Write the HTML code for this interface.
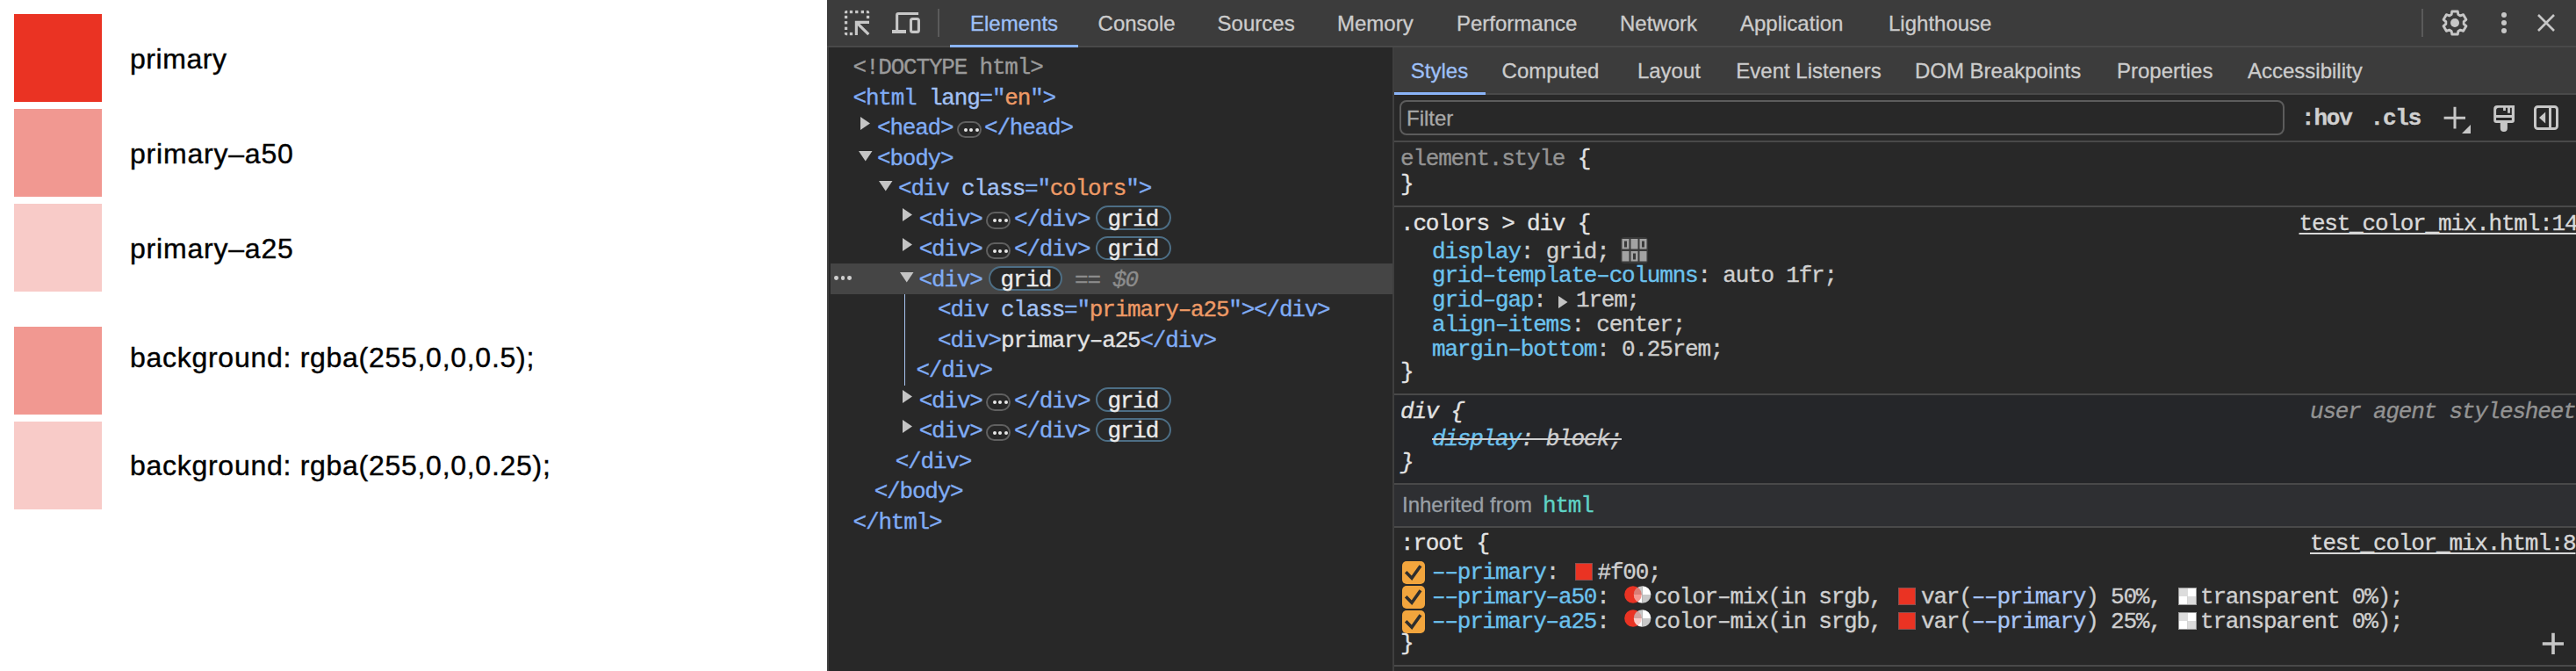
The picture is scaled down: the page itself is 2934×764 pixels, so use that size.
<!DOCTYPE html>
<html lang="en"><head><meta charset="utf-8"><title>DevTools</title><style>
html,body{margin:0;padding:0;width:2934px;height:764px;overflow:hidden;background:#fff}
.b{position:absolute;box-sizing:content-box}
.m{position:absolute;-webkit-text-stroke:0.35px currentColor;font-family:"Liberation Mono",monospace;font-size:26px;letter-spacing:-1.2px;line-height:28px;white-space:pre}
.s{position:absolute;-webkit-text-stroke:0.3px currentColor;font-family:"Liberation Sans",sans-serif;font-size:24px;line-height:28px;white-space:pre}
.p{position:absolute;-webkit-text-stroke:0.4px currentColor;font-family:"Liberation Sans",sans-serif;font-size:32px;line-height:40px;white-space:pre;color:#000}
</style></head><body>
<div class="b" style="left:0px;top:0px;width:942px;height:764px;background:#ffffff;"></div>
<div class="b" style="left:16px;top:16px;width:100px;height:100px;background:#ea3323;"></div>
<div class="b" style="left:16px;top:124px;width:100px;height:100px;background:#f19891;"></div>
<div class="b" style="left:16px;top:232px;width:100px;height:100px;background:#f8cbc8;"></div>
<div class="b" style="left:16px;top:372px;width:100px;height:100px;background:#f19891;"></div>
<div class="b" style="left:16px;top:480px;width:100px;height:100px;background:#f8cbc8;"></div>
<div class="p" style="left:148px;top:47px;letter-spacing:0.57px">primary</div>
<div class="p" style="left:148px;top:155px;letter-spacing:0.8px">primary&#8211;a50</div>
<div class="p" style="left:148px;top:263px;letter-spacing:0.8px">primary&#8211;a25</div>
<div class="p" style="left:148px;top:386.5px;letter-spacing:0.72px">background: rgba(255,0,0,0.5);</div>
<div class="p" style="left:148px;top:510px;letter-spacing:0.72px">background: rgba(255,0,0,0.25);</div>
<div class="b" style="left:942px;top:0px;width:1992px;height:764px;background:#282828;"></div>
<div class="b" style="left:942px;top:0px;width:1992px;height:52px;background:#3c3c3c;"></div>
<div class="b" style="left:942px;top:52px;width:1992px;height:2px;background:#494949;"></div>
<div class="b" style="left:942px;top:54px;width:2px;height:710px;background:#3d3d3d;"></div>
<svg class="b" style="left:956px;top:6px" width="40" height="40" viewBox="0 0 40 40">
<g fill="#c7c7c7">
<path d="M5.9 9.2 V7.9 a2 2 0 0 1 2 -2 H9.2 V9.2 Z"/><rect x="11.8" y="5.9" width="3.3" height="3.3"/><rect x="18.1" y="5.9" width="3.3" height="3.3"/><rect x="24.7" y="5.9" width="3.3" height="3.3"/>
<path d="M30.9 5.9 H32.2 a2 2 0 0 1 2 2 V9.2 H30.9 Z"/>
<rect x="5.9" y="11.8" width="3.3" height="3.3"/><rect x="5.9" y="18.1" width="3.3" height="3.3"/><rect x="5.9" y="24.7" width="3.3" height="3.3"/>
<path d="M5.9 30.9 H9.2 V34.2 H7.9 a2 2 0 0 1 -2 -2 Z"/>
<rect x="11.8" y="30.9" width="3.3" height="3.3"/><rect x="30.9" y="11.8" width="3.3" height="3.3"/>
<path d="M17.8 17.8 H34 V20.9 H20.9 V34 H17.8 Z"/>
</g>
<path d="M20 20 L33.3 33.2" stroke="#c7c7c7" stroke-width="3.2"/>
</svg>
<svg class="b" style="left:1012px;top:6px" width="40" height="40" viewBox="0 0 40 40">
<path d="M11.1 8.1 H34.1 V10.9 H11.2 V28.1 H20 V31.9 H4 V28.1 H8.1 V11.1 a3 3 0 0 1 3 -3 Z" fill="#c7c7c7"/>
<rect x="25.5" y="15.5" width="8.9" height="14.9" rx="2" fill="none" stroke="#c7c7c7" stroke-width="3.1"/>
</svg>
<div class="b" style="left:1068px;top:10px;width:2px;height:32px;background:#5a5a5a;"></div>
<div class="s" style="left:1105.0px;top:13.0px;color:#9ec0f8;">Elements</div>
<div class="s" style="left:1250.6px;top:13.0px;color:#cccccc;">Console</div>
<div class="s" style="left:1386.6px;top:13.0px;color:#cccccc;">Sources</div>
<div class="s" style="left:1523.0px;top:13.0px;color:#cccccc;">Memory</div>
<div class="s" style="left:1659.0px;top:13.0px;color:#cccccc;">Performance</div>
<div class="s" style="left:1845.0px;top:13.0px;color:#cccccc;">Network</div>
<div class="s" style="left:1982.0px;top:13.0px;color:#cccccc;">Application</div>
<div class="s" style="left:2151.0px;top:13.0px;color:#cccccc;">Lighthouse</div>
<div class="b" style="left:1082px;top:51px;width:146px;height:3px;background:#8ab4f8;"></div>
<div class="b" style="left:2758px;top:10px;width:2px;height:32px;background:#5a5a5a;"></div>
<svg class="b" style="left:2776px;top:6px" width="40" height="40" viewBox="0 0 40 40">
<path fill="none" stroke="#c7c7c7" stroke-width="2.9" stroke-linejoin="round" d="M16.14 10.45 L16.76 7.00 L23.24 7.00 L23.86 10.45 L26.34 11.88 L29.64 10.69 L32.88 16.31 L30.20 18.57 L30.20 21.43 L32.88 23.69 L29.64 29.31 L26.34 28.12 L23.86 29.55 L23.24 33.00 L16.76 33.00 L16.14 29.55 L13.66 28.12 L10.36 29.31 L7.12 23.69 L9.80 21.43 L9.80 18.57 L7.12 16.31 L10.36 10.69 L13.66 11.88 Z"/>
<circle cx="20" cy="20" r="5" fill="#c7c7c7"/>
</svg>
<div class="b" style="left:2849px;top:14px;width:6px;height:6px;border-radius:50%;background:#c7c7c7"></div>
<div class="b" style="left:2849px;top:23px;width:6px;height:6px;border-radius:50%;background:#c7c7c7"></div>
<div class="b" style="left:2849px;top:32px;width:6px;height:6px;border-radius:50%;background:#c7c7c7"></div>
<svg class="b" style="left:2880px;top:6px" width="40" height="40" viewBox="0 0 40 40">
<path d="M11 11 L29 29 M29 11 L11 29" stroke="#c7c7c7" stroke-width="2.6"/>
</svg>
<div class="b" style="left:946px;top:300px;width:640px;height:35px;background:#454545;"></div>
<div class="m" style="left:971.5px;top:63.2px;color:#9a9a9a;">&lt;!DOCTYPE html&gt;</div>
<div class="m" style="left:971.5px;top:97.7px;"><span style="color:#80acf5">&lt;html</span><span style="color:#a3c2f5"> lang</span><span style="color:#80acf5">="</span><span style="color:#ee9a66">en</span><span style="color:#80acf5">"&gt;</span></div>
<svg class="b" style="left:979.9px;top:133.2px" width="12" height="15"><path d="M0 0 L11 7.5 L0 15 Z" fill="#c4c4c4"/></svg>
<div class="m" style="left:999.0px;top:132.2px;"><span style="color:#80acf5">&lt;head&gt;</span></div>
<div class="b" style="left:1090.0px;top:137.9px;width:24px;height:15.3px;border:2px solid #606060;border-radius:10px"></div>
<div class="b" style="left:1097.5px;top:145.5px;width:4.4px;height:4.4px;border-radius:50%;background:#e8e8e8"></div>
<div class="b" style="left:1104.0px;top:145.5px;width:4.4px;height:4.4px;border-radius:50%;background:#e8e8e8"></div>
<div class="b" style="left:1110.5px;top:145.5px;width:4.4px;height:4.4px;border-radius:50%;background:#e8e8e8"></div>
<div class="m" style="left:1121.0px;top:132.2px;"><span style="color:#80acf5">&lt;/head&gt;</span></div>
<svg class="b" style="left:977.7px;top:171.5px" width="16" height="12"><path d="M0 0 L15.5 0 L7.75 11.5 Z" fill="#c4c4c4"/></svg>
<div class="m" style="left:999.0px;top:166.7px;"><span style="color:#80acf5">&lt;body&gt;</span></div>
<svg class="b" style="left:1001.3px;top:206.0px" width="16" height="12"><path d="M0 0 L15.5 0 L7.75 11.5 Z" fill="#c4c4c4"/></svg>
<div class="m" style="left:1023.0px;top:201.2px;"><span style="color:#80acf5">&lt;div</span><span style="color:#a3c2f5"> class</span><span style="color:#80acf5">="</span><span style="color:#ee9a66">colors</span><span style="color:#80acf5">"&gt;</span></div>
<svg class="b" style="left:1027.6px;top:236.7px" width="12" height="15"><path d="M0 0 L11 7.5 L0 15 Z" fill="#c4c4c4"/></svg>
<div class="m" style="left:1046.7px;top:235.7px;"><span style="color:#80acf5">&lt;div&gt;</span></div>
<div class="b" style="left:1123.0px;top:241.4px;width:24px;height:15.3px;border:2px solid #606060;border-radius:10px"></div>
<div class="b" style="left:1130.5px;top:249.0px;width:4.4px;height:4.4px;border-radius:50%;background:#e8e8e8"></div>
<div class="b" style="left:1137.0px;top:249.0px;width:4.4px;height:4.4px;border-radius:50%;background:#e8e8e8"></div>
<div class="b" style="left:1143.5px;top:249.0px;width:4.4px;height:4.4px;border-radius:50%;background:#e8e8e8"></div>
<div class="m" style="left:1155.0px;top:235.7px;"><span style="color:#80acf5">&lt;/div&gt;</span></div>
<div class="b" style="left:1248.0px;top:234.3px;width:81.6px;height:23.6px;border:2px solid #4d6e85;border-radius:14px;background:#282828"></div>
<div class="m" style="left:1261.5px;top:235.7px;color:#ebebeb;">grid</div>
<svg class="b" style="left:1027.6px;top:271.2px" width="12" height="15"><path d="M0 0 L11 7.5 L0 15 Z" fill="#c4c4c4"/></svg>
<div class="m" style="left:1046.7px;top:270.2px;"><span style="color:#80acf5">&lt;div&gt;</span></div>
<div class="b" style="left:1123.0px;top:275.9px;width:24px;height:15.3px;border:2px solid #606060;border-radius:10px"></div>
<div class="b" style="left:1130.5px;top:283.5px;width:4.4px;height:4.4px;border-radius:50%;background:#e8e8e8"></div>
<div class="b" style="left:1137.0px;top:283.5px;width:4.4px;height:4.4px;border-radius:50%;background:#e8e8e8"></div>
<div class="b" style="left:1143.5px;top:283.5px;width:4.4px;height:4.4px;border-radius:50%;background:#e8e8e8"></div>
<div class="m" style="left:1155.0px;top:270.2px;"><span style="color:#80acf5">&lt;/div&gt;</span></div>
<div class="b" style="left:1248.0px;top:268.8px;width:81.6px;height:23.6px;border:2px solid #4d6e85;border-radius:14px;background:#282828"></div>
<div class="m" style="left:1261.5px;top:270.2px;color:#ebebeb;">grid</div>
<svg class="b" style="left:1027.6px;top:443.7px" width="12" height="15"><path d="M0 0 L11 7.5 L0 15 Z" fill="#c4c4c4"/></svg>
<div class="m" style="left:1046.7px;top:442.7px;"><span style="color:#80acf5">&lt;div&gt;</span></div>
<div class="b" style="left:1123.0px;top:448.4px;width:24px;height:15.3px;border:2px solid #606060;border-radius:10px"></div>
<div class="b" style="left:1130.5px;top:456.0px;width:4.4px;height:4.4px;border-radius:50%;background:#e8e8e8"></div>
<div class="b" style="left:1137.0px;top:456.0px;width:4.4px;height:4.4px;border-radius:50%;background:#e8e8e8"></div>
<div class="b" style="left:1143.5px;top:456.0px;width:4.4px;height:4.4px;border-radius:50%;background:#e8e8e8"></div>
<div class="m" style="left:1155.0px;top:442.7px;"><span style="color:#80acf5">&lt;/div&gt;</span></div>
<div class="b" style="left:1248.0px;top:441.3px;width:81.6px;height:23.6px;border:2px solid #4d6e85;border-radius:14px;background:#282828"></div>
<div class="m" style="left:1261.5px;top:442.7px;color:#ebebeb;">grid</div>
<svg class="b" style="left:1027.6px;top:478.2px" width="12" height="15"><path d="M0 0 L11 7.5 L0 15 Z" fill="#c4c4c4"/></svg>
<div class="m" style="left:1046.7px;top:477.2px;"><span style="color:#80acf5">&lt;div&gt;</span></div>
<div class="b" style="left:1123.0px;top:482.9px;width:24px;height:15.3px;border:2px solid #606060;border-radius:10px"></div>
<div class="b" style="left:1130.5px;top:490.5px;width:4.4px;height:4.4px;border-radius:50%;background:#e8e8e8"></div>
<div class="b" style="left:1137.0px;top:490.5px;width:4.4px;height:4.4px;border-radius:50%;background:#e8e8e8"></div>
<div class="b" style="left:1143.5px;top:490.5px;width:4.4px;height:4.4px;border-radius:50%;background:#e8e8e8"></div>
<div class="m" style="left:1155.0px;top:477.2px;"><span style="color:#80acf5">&lt;/div&gt;</span></div>
<div class="b" style="left:1248.0px;top:475.8px;width:81.6px;height:23.6px;border:2px solid #4d6e85;border-radius:14px;background:#282828"></div>
<div class="m" style="left:1261.5px;top:477.2px;color:#ebebeb;">grid</div>
<svg class="b" style="left:1025.0px;top:309.5px" width="16" height="12"><path d="M0 0 L15.5 0 L7.75 11.5 Z" fill="#c4c4c4"/></svg>
<div class="m" style="left:1046.6px;top:304.7px;"><span style="color:#80acf5">&lt;div&gt;</span></div>
<div class="b" style="left:1126.0px;top:303.3px;width:80.0px;height:23.6px;border:2px solid #4d6e85;border-radius:14px;background:#282828"></div>
<div class="m" style="left:1139.5px;top:304.7px;color:#ebebeb;">grid</div>
<div class="m" style="left:1224.0px;top:304.7px;color:#8c8c8c;"><span style="font-style:normal">==</span> <i>$0</i></div>
<div class="m" style="left:1068.0px;top:339.2px;"><span style="color:#80acf5">&lt;div</span><span style="color:#a3c2f5"> class</span><span style="color:#80acf5">="</span><span style="color:#ee9a66">primary–a25</span><span style="color:#80acf5">"&gt;&lt;/div&gt;</span></div>
<div class="m" style="left:1068.0px;top:373.7px;"><span style="color:#80acf5">&lt;div&gt;</span><span style="color:#e3e3e3">primary–a25</span><span style="color:#80acf5">&lt;/div&gt;</span></div>
<div class="m" style="left:1043.4px;top:408.2px;"><span style="color:#80acf5">&lt;/div&gt;</span></div>
<div class="b" style="left:1029.8px;top:335px;width:1.5px;height:104px;background:#a8c4f0;"></div>
<div class="m" style="left:1019.7px;top:511.7px;"><span style="color:#80acf5">&lt;/div&gt;</span></div>
<div class="m" style="left:995.7px;top:546.2px;"><span style="color:#80acf5">&lt;/body&gt;</span></div>
<div class="m" style="left:971.6px;top:580.7px;"><span style="color:#80acf5">&lt;/html&gt;</span></div>
<div class="b" style="left:950.3px;top:314.0px;width:4.8px;height:4.8px;border-radius:50%;background:#d0d0d0"></div>
<div class="b" style="left:957.5px;top:314.0px;width:4.8px;height:4.8px;border-radius:50%;background:#d0d0d0"></div>
<div class="b" style="left:964.8px;top:314.0px;width:4.8px;height:4.8px;border-radius:50%;background:#d0d0d0"></div>
<div class="b" style="left:1586px;top:54px;width:2px;height:710px;background:#3f3f3f;"></div>
<div class="b" style="left:1588px;top:54px;width:1346px;height:52px;background:#3c3c3c;"></div>
<div class="b" style="left:1588px;top:106px;width:1346px;height:2px;background:#494949;"></div>
<div class="s" style="left:1606.8px;top:67.0px;color:#9ec0f8;">Styles</div>
<div class="s" style="left:1710.6px;top:67.0px;color:#cccccc;">Computed</div>
<div class="s" style="left:1864.9px;top:67.0px;color:#cccccc;">Layout</div>
<div class="s" style="left:1977.3px;top:67.0px;color:#cccccc;">Event Listeners</div>
<div class="s" style="left:2180.9px;top:67.0px;color:#cccccc;">DOM Breakpoints</div>
<div class="s" style="left:2411.0px;top:67.0px;color:#cccccc;">Properties</div>
<div class="s" style="left:2560.0px;top:67.0px;color:#cccccc;">Accessibility</div>
<div class="b" style="left:1588px;top:105px;width:104px;height:3px;background:#8ab4f8;"></div>
<div class="b" style="left:1588px;top:160px;width:1346px;height:2px;background:#494949;"></div>
<div class="b" style="left:1594px;top:114px;width:1004px;height:36px;border:2px solid #5c5c5c;border-radius:8px"></div>
<div class="s" style="left:1602.0px;top:120.6px;color:#a8a8a8;">Filter</div>
<div class="m" style="left:2621.0px;top:121.0px;color:#d0d0d0;font-weight:bold">:hov</div>
<div class="m" style="left:2699.5px;top:121.0px;color:#d0d0d0;font-weight:bold">.cls</div>
<svg class="b" style="left:2780px;top:118px" width="40" height="40" viewBox="0 0 40 40">
<path d="M16 3.8 V28.5 M3.6 16.2 H28" stroke="#c7c7c7" stroke-width="3"/>
<path d="M34 24 V34 H24 Z" fill="#c7c7c7"/>
</svg>
<svg class="b" style="left:2838px;top:118px" width="30" height="36" viewBox="0 0 30 36">
<path fill="#c7c7c7" fill-rule="evenodd" d="M6.2 1.9 H26 V18.9 a3 3 0 0 1 -3 3 H17.9 V28 a4.05 4.05 0 0 1 -8.1 0 V21.9 H5.2 a3 3 0 0 1 -3 -3 V5.9 a4 4 0 0 1 4 -4 Z M8.1 4.8 H13.1 V7.9 H15.9 V4.8 H18.1 V10.7 H20.9 V4.8 H22.8 V13 H5.1 V7.8 a3 3 0 0 1 3 -3 Z M5.1 16 H22.8 V19 H5.1 Z"/>
</svg>
<svg class="b" style="left:2884px;top:118px" width="32" height="32" viewBox="0 0 32 32">
<rect x="3.5" y="3.5" width="25" height="25" rx="3" fill="none" stroke="#c7c7c7" stroke-width="3"/>
<rect x="19" y="3.5" width="3" height="25" fill="#c7c7c7"/>
<path d="M15.2 9.4 V22.5 L8 16 Z" fill="#c7c7c7"/>
</svg>
<div class="m" style="left:1595.0px;top:166.7px;color:#e3e3e3;"><span style="color:#939393">element.style</span> {</div>
<div class="m" style="left:1595.0px;top:196.4px;color:#e3e3e3;">}</div>
<div class="b" style="left:1588px;top:234px;width:1346px;height:2px;background:#494949;"></div>
<div class="m" style="left:1595.0px;top:240.5px;color:#e3e3e3;">.colors &gt; div {</div>
<div class="m" style="left:2618.5px;top:241.0px;color:#d8d8d8;text-decoration:underline;text-underline-offset:3px;text-decoration-thickness:2px">test_color_mix.html:14</div>
<div class="m" style="left:1631.0px;top:272.7px;color:#cfcfcf;"><span style="color:#6cc2ee">display</span>: grid;</div>
<div class="m" style="left:1631.0px;top:300.4px;color:#cfcfcf;"><span style="color:#6cc2ee">grid–template–columns</span>: auto 1fr;</div>
<div class="m" style="left:1631.0px;top:327.8px;color:#cfcfcf;"><span style="color:#6cc2ee">grid–gap</span>:</div>
<svg class="b" style="left:1775px;top:337px" width="12" height="14"><path d="M0 0 L10.5 7 L0 14 Z" fill="#c4c4c4"/></svg>
<div class="m" style="left:1795.0px;top:327.8px;color:#cfcfcf;">1rem;</div>
<div class="m" style="left:1631.0px;top:356.1px;color:#cfcfcf;"><span style="color:#6cc2ee">align–items</span>: center;</div>
<div class="m" style="left:1631.0px;top:383.8px;color:#cfcfcf;"><span style="color:#6cc2ee">margin–bottom</span>: 0.25rem;</div>
<div class="m" style="left:1595.0px;top:410.0px;color:#e3e3e3;">}</div>
<svg class="b" style="left:1846px;top:270px" width="31" height="30" viewBox="0 0 31 30">
<rect x="0" y="0" width="31" height="30" rx="4" fill="#3a3a3a"/>
<g fill="#a3a3a3">
<rect x="1.5" y="2" width="8" height="11.5"/><rect x="11.5" y="2" width="8" height="11.5"/><rect x="21.5" y="2" width="8" height="11.5"/>
<rect x="1.5" y="16" width="8" height="11.5"/><rect x="11.5" y="16" width="8" height="11.5"/><rect x="21.5" y="16" width="8" height="11.5"/>
</g>
<g fill="#3a3a3a"><rect x="4" y="4.5" width="3" height="7"/><rect x="24" y="4.5" width="3" height="7"/><rect x="14" y="18.5" width="3" height="7"/></g>
</svg>
<div class="b" style="left:1588px;top:448px;width:1346px;height:2px;background:#494949;"></div>
<div class="b" style="left:1588px;top:450px;width:1346px;height:100px;background:#252629;"></div>
<div class="m" style="left:1595.0px;top:454.8px;color:#e3e3e3;font-style:italic">div {</div>
<div class="m" style="left:2631.0px;top:454.8px;color:#939393;font-style:italic">user agent stylesheet</div>
<div class="m" style="left:1631.0px;top:486.2px;color:#cfcfcf;font-style:italic"><span style="color:#6cc2ee">display</span>: block;</div>
<div class="b" style="left:1631px;top:499px;width:216.0px;height:2px;background:#cfcfcf;"></div>
<div class="m" style="left:1595.0px;top:513.0px;color:#e3e3e3;font-style:italic">}</div>
<div class="b" style="left:1588px;top:550px;width:1346px;height:2px;background:#494949;"></div>
<div class="b" style="left:1588px;top:552px;width:1346px;height:47px;background:#2e2f32;"></div>
<div class="s" style="left:1597.0px;top:561.0px;color:#9aa0a6;">Inherited from</div>
<div class="m" style="left:1757.0px;top:562.0px;color:#5fd3c5;">html</div>
<div class="b" style="left:1588px;top:599px;width:1346px;height:2px;background:#494949;"></div>
<div class="m" style="left:1595.0px;top:605.3px;color:#e3e3e3;">:root {</div>
<div class="m" style="left:2631.0px;top:605.2px;color:#d8d8d8;text-decoration:underline;text-underline-offset:3px;text-decoration-thickness:2px">test_color_mix.html:8</div>
<svg class="b" style="left:1597px;top:639.3px" width="26" height="26" viewBox="0 0 26 26">
<rect width="26" height="26" rx="5" fill="#f2a53d"/><path d="M4.2 12.3 L11 19.2 L21 5.2" fill="none" stroke="#2e2e2e" stroke-width="3.6"/></svg>
<svg class="b" style="left:1597px;top:667.3px" width="26" height="26" viewBox="0 0 26 26">
<rect width="26" height="26" rx="5" fill="#f2a53d"/><path d="M4.2 12.3 L11 19.2 L21 5.2" fill="none" stroke="#2e2e2e" stroke-width="3.6"/></svg>
<svg class="b" style="left:1597px;top:695.0px" width="26" height="26" viewBox="0 0 26 26">
<rect width="26" height="26" rx="5" fill="#f2a53d"/><path d="M4.2 12.3 L11 19.2 L21 5.2" fill="none" stroke="#2e2e2e" stroke-width="3.6"/></svg>
<div class="m" style="left:1631.0px;top:637.7px;color:#cfcfcf;"><span style="color:#6cc2ee">––primary</span>:</div>
<div class="b" style="left:1794px;top:641px;width:20px;height:20px;background:#ea3323;box-shadow:inset 0 0 0 1px #8a5050"></div>
<div class="m" style="left:1819.5px;top:637.7px;color:#cfcfcf;">#f00;</div>
<div class="m" style="left:1631.0px;top:665.7px;color:#cfcfcf;"><span style="color:#6cc2ee">––primary–a50</span>:</div>
<svg class="b" style="left:1849.5px;top:666.5px" width="32" height="21" viewBox="0 0 32 21">
<defs><clipPath id="r50"><circle cx="20.6" cy="10" r="9.8"/></clipPath><clipPath id="l50"><circle cx="10" cy="10" r="9.8"/></clipPath></defs>
<circle cx="10" cy="10" r="9.8" fill="#ea3323"/>
<g clip-path="url(#r50)">
<rect x="10" y="0" width="10.6" height="10" fill="#c8c8c8"/><rect x="20.6" y="0" width="11" height="10" fill="#ffffff"/>
<rect x="10" y="10" width="10.6" height="11" fill="#ffffff"/><rect x="20.6" y="10" width="11" height="11" fill="#c8c8c8"/>
<g clip-path="url(#l50)"><rect x="0" y="0" width="32" height="21" fill="rgba(234,51,35,0.5)"/></g>
</g>
</svg>
<div class="m" style="left:1884.0px;top:665.7px;color:#cfcfcf;">color–mix(in srgb,</div>
<div class="b" style="left:2162px;top:669.0px;width:20px;height:20.0px;background:#ea3323;box-shadow:inset 0 0 0 1px #8a5050"></div>
<div class="m" style="left:2188.0px;top:665.7px;color:#cfcfcf;">var(<span style="color:#a8c4f5">––primary</span>) 50%,</div>
<svg class="b" style="left:2480.5px;top:669.0px" width="21" height="20" viewBox="0 0 21 20">
<rect width="21" height="20" fill="#9a9a9a"/><rect x="1" y="1" width="9.5" height="9" fill="#dcdcdc"/><rect x="10.5" y="1" width="9.5" height="9" fill="#ffffff"/>
<rect x="1" y="10" width="9.5" height="9" fill="#ffffff"/><rect x="10.5" y="10" width="9.5" height="9" fill="#dcdcdc"/></svg>
<div class="m" style="left:2506.0px;top:665.7px;color:#cfcfcf;">transparent 0%);</div>
<div class="m" style="left:1631.0px;top:693.5px;color:#cfcfcf;"><span style="color:#6cc2ee">––primary–a25</span>:</div>
<svg class="b" style="left:1849.5px;top:694.3px" width="32" height="21" viewBox="0 0 32 21">
<defs><clipPath id="r25"><circle cx="20.6" cy="10" r="9.8"/></clipPath><clipPath id="l25"><circle cx="10" cy="10" r="9.8"/></clipPath></defs>
<circle cx="10" cy="10" r="9.8" fill="#ea3323"/>
<g clip-path="url(#r25)">
<rect x="10" y="0" width="10.6" height="10" fill="#c8c8c8"/><rect x="20.6" y="0" width="11" height="10" fill="#ffffff"/>
<rect x="10" y="10" width="10.6" height="11" fill="#ffffff"/><rect x="20.6" y="10" width="11" height="11" fill="#c8c8c8"/>
<g clip-path="url(#l25)"><rect x="0" y="0" width="32" height="21" fill="rgba(234,51,35,0.25)"/></g>
</g>
</svg>
<div class="m" style="left:1884.0px;top:693.5px;color:#cfcfcf;">color–mix(in srgb,</div>
<div class="b" style="left:2162px;top:696.8px;width:20px;height:20.0px;background:#ea3323;box-shadow:inset 0 0 0 1px #8a5050"></div>
<div class="m" style="left:2188.0px;top:693.5px;color:#cfcfcf;">var(<span style="color:#a8c4f5">––primary</span>) 25%,</div>
<svg class="b" style="left:2480.5px;top:696.8px" width="21" height="20" viewBox="0 0 21 20">
<rect width="21" height="20" fill="#9a9a9a"/><rect x="1" y="1" width="9.5" height="9" fill="#dcdcdc"/><rect x="10.5" y="1" width="9.5" height="9" fill="#ffffff"/>
<rect x="1" y="10" width="9.5" height="9" fill="#ffffff"/><rect x="10.5" y="10" width="9.5" height="9" fill="#dcdcdc"/></svg>
<div class="m" style="left:2506.0px;top:693.5px;color:#cfcfcf;">transparent 0%);</div>
<div class="m" style="left:1595.0px;top:719.0px;color:#e3e3e3;">}</div>
<svg class="b" style="left:2890px;top:715px" width="36" height="36" viewBox="0 0 36 36">
<path d="M18 5.7 V30.1 M5.8 18 H30" stroke="#c7c7c7" stroke-width="3.6"/></svg>
<div class="b" style="left:1588px;top:757px;width:1346px;height:2px;background:#494949;"></div>
</body></html>
